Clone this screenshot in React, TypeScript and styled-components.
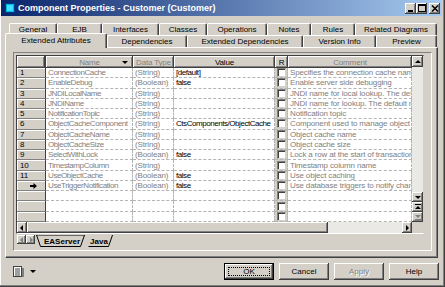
import React from "react";
import styled, { createGlobalStyle, css } from "styled-components";

const face = "#d4d0c8";
const shadow = "#808080";
const dark = "#404040";

const GlobalStyle = createGlobalStyle`
  body {
    margin: 0;
    background: #fff;
    font-family: "Liberation Sans", Arial, sans-serif;
  }
`;

const raised = css`
  box-shadow: inset -1px -1px ${dark}, inset 1px 1px #fff, inset -2px -2px ${shadow};
`;

type Row = {
  num: string;
  name: string;
  type: string;
  value: string;
  comment: string;
};

const rows: Row[] = [
  { num: "1", name: "ConnectionCache", type: "(String)", value: "[default]", comment: "Specifies the connection cache name" },
  { num: "2", name: "EnableDebug", type: "(Boolean)", value: "false", comment: "Enable server side debugging" },
  { num: "3", name: "JNDILocalName", type: "(String)", value: "", comment: "JNDI name for local lookup.  The default name" },
  { num: "4", name: "JNDIName", type: "(String)", value: "", comment: "JNDI name for lookup.  The default name" },
  { num: "5", name: "NotificationTopic", type: "(String)", value: "", comment: "Notification topic" },
  { num: "6", name: "ObjectCacheComponent", type: "(String)", value: "CtsComponents/ObjectCache", comment: "Component used to manage object cache" },
  { num: "7", name: "ObjectCacheName", type: "(String)", value: "", comment: "Object cache name" },
  { num: "8", name: "ObjectCacheSize", type: "(String)", value: "", comment: "Object cache size" },
  { num: "9", name: "SelectWithLock", type: "(Boolean)", value: "false", comment: "Lock a row at the start of transaction (select)" },
  { num: "10", name: "TimestampColumn", type: "(String)", value: "", comment: "Timestamp column name" },
  { num: "11", name: "UseObjectCache", type: "(Boolean)", value: "false", comment: "Use object caching" },
  { num: "arrow", name: "UseTriggerNotification", type: "(Boolean)", value: "false", comment: "Use database triggers to notify changes" },
  { num: "", name: "", type: "", value: "", comment: "" },
  { num: "", name: "", type: "", value: "", comment: "" },
  { num: "", name: "", type: "", value: "", comment: "" },
];

const topTabs = [
  { label: "General", w: 48 },
  { label: "EJB", w: 45 },
  { label: "Interfaces", w: 57 },
  { label: "Classes", w: 48 },
  { label: "Operations", w: 60 },
  { label: "Notes", w: 44 },
  { label: "Rules", w: 44 },
  { label: "Related Diagrams", w: 82 },
];

const frontTabs = [
  { label: "Extended Attributes", w: 102, active: true },
  { label: "Dependencies", w: 80 },
  { label: "Extended Dependencies", w: 116 },
  { label: "Version Info", w: 73 },
  { label: "Preview", w: 61 },
];

type Dir = "up" | "down" | "left" | "right" | "top" | "bottom";

const Arrow = ({ dir, disabled }: { dir: Dir; disabled?: boolean }) => {
  const fill = disabled ? shadow : "#000";
  const shapes: Record<Dir, React.ReactNode> = {
    up: <polygon points="1,5 4,2 7,5" fill={fill} />,
    down: <polygon points="1,3 7,3 4,6" fill={fill} />,
    left: <polygon points="5,1 5,7 2,4" fill={fill} />,
    right: <polygon points="3,1 3,7 6,4" fill={fill} />,
    top: (
      <>
        <rect x="1" y="1" width="6" height="1" fill={fill} />
        <polygon points="1,6 4,3 7,6" fill={fill} />
      </>
    ),
    bottom: (
      <>
        <polygon points="1,2 7,2 4,5" fill={fill} />
        <rect x="1" y="6" width="6" height="1" fill={fill} />
      </>
    ),
  };
  return (
    <svg width="8" height="8" viewBox="0 0 8 8">
      {shapes[dir]}
    </svg>
  );
};

const App = () => (
  <>
    <GlobalStyle />
    <Window>
      <TitleBar>
        <TitleIcon>
          <svg width="10" height="10" viewBox="0 0 10 10">
            <rect x="0.5" y="0.5" width="9" height="9" fill="#00b8e8" stroke="#003c8c" />
            <rect x="2" y="2" width="6" height="6" fill="#40e0ff" />
          </svg>
        </TitleIcon>
        <TitleText>Component Properties - Customer (Customer)</TitleText>
        <CaptionButtons>
          <CaptionButton>
            <svg width="7" height="7" viewBox="0 0 7 7">
              <rect x="1" y="5" width="5" height="2" fill="#000" />
            </svg>
          </CaptionButton>
          <CaptionButton>
            <svg width="8" height="8" viewBox="0 0 8 8">
              <rect x="0.5" y="0.5" width="7" height="7" fill="none" stroke="#000" />
              <rect x="0" y="0" width="8" height="2" fill="#000" />
            </svg>
          </CaptionButton>
          <CloseButton>
            <svg width="8" height="7" viewBox="0 0 8 7">
              <path d="M1 0.5 L7 6.5 M7 0.5 L1 6.5" stroke="#000" strokeWidth="1.5" />
            </svg>
          </CloseButton>
        </CaptionButtons>
      </TitleBar>

      <Tabs>
        <BackRow>
          {topTabs.map((t) => (
            <Tab key={t.label} $w={t.w}>
              {t.label}
            </Tab>
          ))}
        </BackRow>
        <FrontRow>
          {frontTabs.map((t) => (
            <Tab key={t.label} $w={t.w} $active={t.active}>
              {t.label}
            </Tab>
          ))}
        </FrontRow>
      </Tabs>

      <Page>
        <Frame>
          <GridBox>
            <GridMain>
              <Table>
                <CornerCell />
                <HeaderCell $muted>
                  <span>Name</span>
                  <HeaderDrop>
                    <Arrow dir="down" />
                  </HeaderDrop>
                </HeaderCell>
                <HeaderCell $muted>Data Type</HeaderCell>
                <HeaderCell>Value</HeaderCell>
                <HeaderCell>R</HeaderCell>
                <HeaderCell $muted>Comment</HeaderCell>
                {rows.map((r, i) => (
                  <React.Fragment key={i}>
                    <NumCell $arrow={r.num === "arrow"}>
                      {r.num === "arrow" ? (
                        <svg width="7" height="6" viewBox="0 0 7 6">
                          <path d="M0 2 H3.5 V0 L7 3 L3.5 6 V4 H0 Z" fill="#000" />
                        </svg>
                      ) : (
                        r.num
                      )}
                    </NumCell>
                    <Cell $muted $spacing={-0.4}>
                      {r.name}
                    </Cell>
                    <Cell $muted>{r.type}</Cell>
                    <Cell $spacing={-0.45}>{r.value}</Cell>
                    <CheckCell>
                      <CheckBox />
                    </CheckCell>
                    <Cell $muted>{r.comment}</Cell>
                  </React.Fragment>
                ))}
              </Table>
              <VScroll>
                <ScrollButton $h={11}>
                  <Arrow dir="up" />
                </ScrollButton>
                <ScrollTrack />
                <ScrollButton $h={10}>
                  <Arrow dir="down" />
                </ScrollButton>
                <ScrollButton $h={10}>
                  <Arrow dir="top" />
                </ScrollButton>
                <ScrollButton $h={10}>
                  <Arrow dir="bottom" disabled />
                </ScrollButton>
              </VScroll>
            </GridMain>
            <HScroll>
              <ScrollButton $w={10}>
                <Arrow dir="left" />
              </ScrollButton>
              <HThumb />
              <ScrollTrack />
              <ScrollButton $w={10}>
                <Arrow dir="right" />
              </ScrollButton>
              <ScrollCorner />
            </HScroll>
          </GridBox>

          <SheetBar>
            <SheetNav>
              <Arrow dir="left" disabled />
            </SheetNav>
            <SheetNav>
              <Arrow dir="right" disabled />
            </SheetNav>
            <SheetTab $w={52} $active>
              <svg width="52" height="12" viewBox="0 0 52 12">
                <polygon points="0.5,0 4.5,11.5 44.5,11.5 48.5,0" fill={face} stroke="#000" />
              </svg>
              <SheetLabel>EAServer</SheetLabel>
            </SheetTab>
            <SheetTab $w={30}>
              <svg width="30" height="12" viewBox="0 0 30 12">
                <polyline points="4.5,11.5 24.5,11.5 28.5,0" fill="none" stroke="#000" />
              </svg>
              <SheetLabel>Java</SheetLabel>
            </SheetTab>
          </SheetBar>
        </Frame>
      </Page>

      <BottomBar>
        <ViewMenu>
          <svg width="11" height="11" viewBox="0 0 11 11">
            <rect x="0.5" y="0.5" width="8" height="10" fill="#fff" stroke="#404040" />
            <rect x="2" y="2.5" width="5" height="1" fill="#404040" />
            <rect x="2" y="4.5" width="5" height="1" fill="#404040" />
            <rect x="2" y="6.5" width="5" height="1" fill="#404040" />
            <rect x="2" y="8.5" width="5" height="1" fill="#404040" />
            <rect x="9" y="2" width="2" height="9" fill="#808080" />
          </svg>
          <Arrow dir="down" />
        </ViewMenu>
        <Buttons>
          <PushButton $default>
            <Focus>OK</Focus>
          </PushButton>
          <PushButton>Cancel</PushButton>
          <PushButton $disabled>Apply</PushButton>
          <PushButton>Help</PushButton>
        </Buttons>
      </BottomBar>
    </Window>
  </>
);

const Window = styled.div`
  width: 445px;
  height: 287px;
  box-sizing: border-box;
  background: ${face};
  padding: 0 3px 3px 1px;
  box-shadow: inset -1px -1px ${dark}, inset -2px -2px ${shadow}, inset 1px 0 #fff;
  display: flex;
  flex-direction: column;
`;

const TitleBar = styled.div`
  height: 16px;
  flex: none;
  display: flex;
  align-items: center;
  padding: 0 2px 0 4px;
  background: linear-gradient(to right, #0a246a, #a6caf0);
`;

const TitleIcon = styled.div`
  display: flex;
  margin-right: 3px;
`;

const TitleText = styled.div`
  flex: 1;
  color: #fff;
  font-weight: bold;
  font-size: 9px;
  white-space: nowrap;
`;

const CaptionButtons = styled.div`
  display: flex;
`;

const CaptionButton = styled.div`
  width: 11px;
  height: 11px;
  background: ${face};
  ${raised};
  display: flex;
  align-items: center;
  justify-content: center;
`;

const CloseButton = styled(CaptionButton)`
  margin-left: 2px;
`;

const Tabs = styled.div`
  flex: none;
  height: 31px;
  display: flex;
  flex-direction: column;
  padding-left: 4px;
`;

const BackRow = styled.div`
  display: flex;
  margin-top: 7px;
  padding-left: 4px;
  height: 12px;
`;

const FrontRow = styled.div`
  display: flex;
  height: 12px;
`;

const Tab = styled.div<{ $w: number; $active?: boolean }>`
  width: ${(p) => p.$w}px;
  height: ${(p) => (p.$active ? 15 : 12)}px;
  margin-top: ${(p) => (p.$active ? -2 : 0)}px;
  position: relative;
  z-index: ${(p) => (p.$active ? 1 : 0)};
  box-sizing: border-box;
  background: ${face};
  border-top: 1px solid #fff;
  border-left: 1px solid #fff;
  border-right: 1px solid ${dark};
  border-radius: 2px 2px 0 0;
  box-shadow: inset -1px 0 ${shadow};
  font-size: 8px;
  color: #000;
  display: flex;
  align-items: ${(p) => (p.$active ? "flex-start" : "center")};
  padding-top: ${(p) => (p.$active ? 2 : 0)}px;
  justify-content: center;
  white-space: nowrap;
`;

const Page = styled.div`
  flex: none;
  width: 433px;
  height: 211px;
  margin-left: 4px;
  box-sizing: border-box;
  border-top: 1px solid #fff;
  border-left: 1px solid #fff;
  border-right: 1px solid ${dark};
  border-bottom: 1px solid ${dark};
  box-shadow: inset -1px -1px ${shadow};
  padding: 4px 0 0 7px;
`;

const Frame = styled.div`
  width: 419px;
  height: 199px;
  box-sizing: border-box;
  border: 1px solid;
  border-color: ${shadow} #fff #fff ${shadow};
  padding: 2px 0 0 2px;
  display: flex;
  flex-direction: column;
`;

const GridBox = styled.div`
  width: 408px;
  box-sizing: border-box;
  border: 1px solid;
  border-color: ${dark} ${face} #fff ${dark};
  display: flex;
  flex-direction: column;
`;

const GridMain = styled.div`
  display: flex;
  height: 166px;
`;

const Table = styled.div`
  flex: 1;
  display: grid;
  grid-template-columns: 29px 87px 41px 101px 13px 1fr;
  grid-template-rows: 12px repeat(15, 1fr);
  background: #fff;
  font-size: 8px;
  letter-spacing: -0.15px;
  overflow: hidden;
`;

const CornerCell = styled.div`
  background: ${face};
  ${raised};
  border-right: 1px solid ${dark};
`;

const HeaderCell = styled.div<{ $muted?: boolean }>`
  background: ${face};
  ${raised};
  color: ${(p) => (p.$muted ? shadow : "#000")};
  display: flex;
  align-items: center;
  justify-content: center;
  position: relative;
  white-space: nowrap;
`;

const HeaderDrop = styled.span`
  position: absolute;
  right: 4px;
  top: 2px;
  display: flex;
`;

const NumCell = styled.div<{ $arrow?: boolean }>`
  background: ${face};
  box-shadow: inset 1px 1px #fff;
  border-right: 1px solid ${dark};
  border-bottom: 1px solid ${shadow};
  display: flex;
  align-items: center;
  justify-content: ${(p) => (p.$arrow ? "flex-end" : "flex-start")};
  padding: 0 8px 0 3px;
  color: #000;
  overflow: hidden;
`;

const Cell = styled.div<{ $muted?: boolean; $spacing?: number }>`
  border-right: 1px dashed #b4b4b4;
  border-bottom: 1px dashed #b4b4b4;
  color: ${(p) => (p.$muted ? shadow : "#000")};
  letter-spacing: ${(p) => (p.$spacing !== undefined ? `${p.$spacing}px` : "inherit")};
  display: flex;
  align-items: center;
  padding-left: 2px;
  white-space: nowrap;
  overflow: hidden;
  min-width: 0;
`;

const CheckCell = styled.div`
  background: ${face};
  border-right: 1px dashed #b4b4b4;
  border-bottom: 1px dashed #b4b4b4;
  display: flex;
  align-items: center;
  justify-content: center;
`;

const CheckBox = styled.div`
  width: 9px;
  height: 9px;
  box-sizing: border-box;
  background: #fff;
  border: 1px solid;
  border-color: ${shadow} ${face} ${face} ${shadow};
  box-shadow: inset 1px 1px ${dark};
`;

const VScroll = styled.div`
  width: 11px;
  display: flex;
  flex-direction: column;
`;

const ScrollButton = styled.div<{ $h?: number; $w?: number }>`
  flex: none;
  height: ${(p) => (p.$h ? `${p.$h}px` : "auto")};
  width: ${(p) => (p.$w ? `${p.$w}px` : "auto")};
  background: ${face};
  ${raised};
  display: flex;
  align-items: center;
  justify-content: center;
`;

const ScrollTrack = styled.div`
  flex: 1;
  background-color: #ebe9e5;
`;

const HScroll = styled.div`
  display: flex;
  height: 11px;
`;

const HThumb = styled.div`
  width: 301px;
  background: ${face};
  ${raised};
`;

const ScrollCorner = styled.div`
  width: 11px;
  background: ${face};
`;

const SheetBar = styled.div`
  display: flex;
  align-items: flex-start;
  height: 12px;
  margin-top: 1px;
  padding-left: 1px;
`;

const SheetNav = styled.div`
  width: 9px;
  height: 9px;
  background: ${face};
  ${raised};
  display: flex;
  align-items: center;
  justify-content: center;
`;

const SheetTab = styled.div<{ $w: number; $active?: boolean }>`
  width: ${(p) => p.$w}px;
  height: 12px;
  position: relative;
  z-index: ${(p) => (p.$active ? 1 : 0)};
  margin-left: ${(p) => (p.$active ? 1 : -4)}px;
  display: flex;
  align-items: center;
  justify-content: center;
  svg {
    position: absolute;
    left: 0;
    top: 0;
  }
`;

const SheetLabel = styled.span`
  position: relative;
  font-size: 8px;
  font-weight: bold;
  color: #000;
`;

const BottomBar = styled.div`
  flex: 1;
  display: flex;
  align-items: center;
  justify-content: space-between;
  padding: 0 3px 0 12px;
`;

const ViewMenu = styled.div`
  display: flex;
  align-items: center;
  gap: 5px;
`;

const Buttons = styled.div`
  display: flex;
  gap: 5px;
`;

const PushButton = styled.div<{ $default?: boolean; $disabled?: boolean }>`
  width: 50px;
  height: 17px;
  box-sizing: border-box;
  background: ${face};
  ${raised};
  border: ${(p) => (p.$default ? "1px solid #000" : "none")};
  font-size: 8px;
  color: ${(p) => (p.$disabled ? shadow : "#000")};
  text-shadow: ${(p) => (p.$disabled ? "1px 1px #fff" : "none")};
  display: flex;
  align-items: center;
  justify-content: center;
  padding: 3px;
`;

const Focus = styled.div`
  flex: 1;
  align-self: stretch;
  border: 1px dotted #000;
  display: flex;
  align-items: center;
  justify-content: center;
`;

export default App;
